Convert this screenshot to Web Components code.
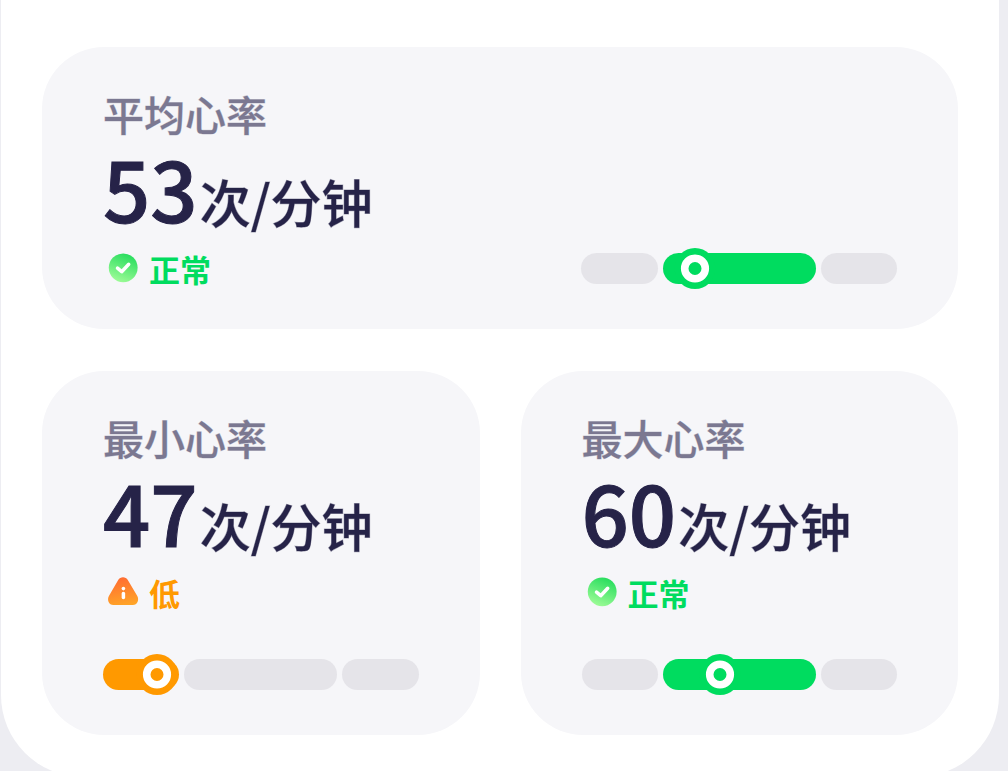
<!DOCTYPE html>
<html lang="zh-CN">
<head>
<meta charset="utf-8">
<meta name="viewport" content="width=device-width, initial-scale=1">
<title>心率</title>
<style>
  html, body { margin: 0; height: 100%; overflow: hidden; }
  body {
    background: #ededf2;
    font-family: "Noto Sans CJK SC", "Noto Sans", sans-serif;
    font-weight: 500;
    color: #262348;
  }
</style>
</head>
<body>
<heart-sheet>
  <heart-card wide label="平均心率" value="53" unit="次/分钟" level="normal" position="36">正常</heart-card>
  <heart-card label="最小心率" value="47" unit="次/分钟" level="low" position="17">低</heart-card>
  <heart-card label="最大心率" value="60" unit="次/分钟" level="normal" position="44">正常</heart-card>
</heart-sheet>

<template id="sheet-template">
  <style>
    :host { display: block; padding: 0 9px 0 1px; }
    main {
      display: grid;
      grid-template-columns: repeat(2, minmax(0, 1fr));
      gap: 42px 41px;
      padding: 47px 41px 42px;
      background: #fff;
      border-radius: 0 0 82px 82px;
    }
  </style>
  <main><slot></slot></main>
</template>

<template id="card-template">
  <style>
    :host {
      --accent: #00dc5f;
      display: flex;
      flex-direction: column;
      gap: 41px;
      box-sizing: border-box;
      padding: 41px 61px 40px;
      background: #f6f6f9;
      border-radius: 62px;
    }
    :host([level="low"]) { --accent: #ff9900; }
    :host([wide]) {
      grid-column: 1 / -1;
      flex-direction: row;
      align-items: flex-end;
      justify-content: space-between;
    }
    :host([wide]) heart-gauge { flex: 0 1 316px; }
    h2 {
      margin: 0 0 6px;
      font-size: 41px;
      line-height: 50px;
      font-weight: 500;
      color: #7b7891;
      -webkit-text-stroke: 1px #7b789155;
    }
    p { margin: 0; white-space: nowrap; }
    .reading {
      display: flex;
      align-items: baseline;
      gap: 2px;
      height: 104px;
      font-size: 51px;
      line-height: 51px;
      -webkit-text-stroke: 1px #26234866;
    }
    .number { font-size: 83px; line-height: 86px; -webkit-text-stroke: 1px #262348; }
    .status {
      display: flex;
      align-items: center;
      gap: 5px;
      height: 41px;
      font-size: 31px;
      line-height: 41px;
      font-weight: 700;
      color: var(--accent);
    }
  </style>
  <div class="summary">
    <h2></h2>
    <p class="reading"><span class="number"></span><span class="unit"></span></p>
    <p class="status"><status-icon></status-icon><slot></slot></p>
  </div>
  <heart-gauge></heart-gauge>
</template>

<template id="icon-template">
  <style>
    :host { display: block; width: 41px; height: 41px; flex: none; }
    svg { display: none; width: 41px; height: 41px; }
    :host([level="normal"]) .normal, :host([level="low"]) .low { display: block; }
  </style>
  <svg class="normal" viewBox="0 0 41 41" aria-hidden="true">
    <defs><linearGradient id="g" x1=".7" y1="0" x2=".3" y2="1"><stop offset="0" stop-color="#24dc5c"/><stop offset="1" stop-color="#a0fc98"/></linearGradient></defs>
    <circle cx="20.2" cy="19.8" r="14.4" fill="url(#g)"/>
    <path d="M14.5 20.2l4.2 3.5 7-7.4" fill="none" stroke="#fff" stroke-width="3.5" stroke-linecap="round" stroke-linejoin="round"/>
  </svg>
  <svg class="low" viewBox="0 0 41 41" aria-hidden="true">
    <defs><linearGradient id="o" x1=".4" y1="0" x2=".6" y2="1"><stop offset="0" stop-color="#ff6c32"/><stop offset="1" stop-color="#ffa428"/></linearGradient></defs>
    <path d="M15.2 7.9C17.3 4.3 22.7 4.3 24.8 7.9L34.3 24C36.4 28 34.4 33 29.8 33H10.4C5.8 33 3.8 28 5.9 24Z" fill="url(#o)"/>
    <circle cx="20.4" cy="16.6" r="1.8" fill="#fff"/>
    <path d="M20.4 21.5v4" stroke="#fff" stroke-width="3.5" stroke-linecap="round"/>
  </svg>
</template>

<template id="gauge-template">
  <style>
    :host { display: block; }
    .track {
      position: relative;
      display: grid;
      grid-template-columns: 1fr 2fr 1fr;
      gap: 5px;
      align-items: center;
      height: 41px;
    }
    .zone { height: 31px; border-radius: 16px; background: #e5e4e9; }
    :host([level="low"]) .zone.low, :host([level="normal"]) .zone.normal { background: var(--accent); }
    .marker {
      position: absolute;
      top: 0;
      left: var(--position);
      width: 41px;
      height: 41px;
      transform: translateX(-50%);
    }
  </style>
  <div class="track" role="meter" aria-valuemin="0" aria-valuemax="100">
    <span class="zone low"></span>
    <span class="zone normal"></span>
    <span class="zone high"></span>
    <svg class="marker" viewBox="0 0 41 41" aria-hidden="true">
      <circle cx="20.5" cy="20.5" r="20.5" fill="var(--accent)"/>
      <circle cx="20.5" cy="20.5" r="10.3" fill="none" stroke="#fff" stroke-width="7.6"/>
    </svg>
  </div>
</template>

<script>
  class TemplateElement extends HTMLElement {
    constructor() {
      super();
      const template = document.getElementById(this.constructor.templateId);
      this.attachShadow({ mode: "open" }).append(template.content.cloneNode(true));
    }
  }

  class StatusIcon extends TemplateElement {
    static templateId = "icon-template";
  }

  class HeartGauge extends TemplateElement {
    static templateId = "gauge-template";
    connectedCallback() {
      const position = this.getAttribute("position");
      const track = this.shadowRoot.querySelector(".track");
      track.style.setProperty("--position", position + "%");
      track.setAttribute("aria-valuenow", position);
      track.setAttribute("aria-label", this.getAttribute("label"));
    }
  }

  class HeartCard extends TemplateElement {
    static templateId = "card-template";
    connectedCallback() {
      const find = selector => this.shadowRoot.querySelector(selector);
      find("h2").textContent = this.getAttribute("label");
      find(".number").textContent = this.getAttribute("value");
      find(".unit").textContent = this.getAttribute("unit");
      find("status-icon").setAttribute("level", this.getAttribute("level"));
      const gauge = document.createElement("heart-gauge");
      for (const name of ["level", "position", "label"]) {
        gauge.setAttribute(name, this.getAttribute(name));
      }
      find("heart-gauge").replaceWith(gauge);
    }
  }

  class HeartSheet extends TemplateElement {
    static templateId = "sheet-template";
  }

  customElements.define("status-icon", StatusIcon);
  customElements.define("heart-gauge", HeartGauge);
  customElements.define("heart-card", HeartCard);
  customElements.define("heart-sheet", HeartSheet);
</script>
</body>
</html>
